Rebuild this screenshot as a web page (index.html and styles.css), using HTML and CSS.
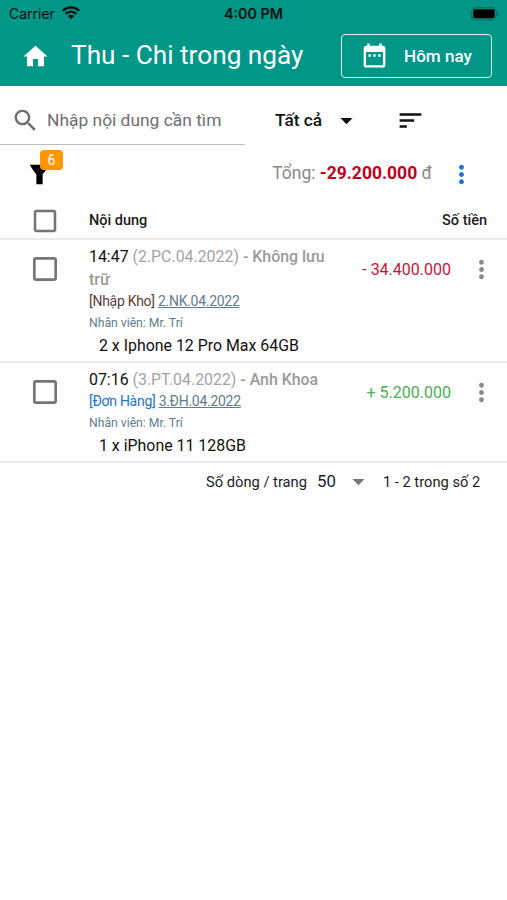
FILE: index.html
```html
<!DOCTYPE html>
<html lang="vi">
<head>
<meta charset="utf-8">
<title>Thu - Chi trong ngày</title>
<link rel="stylesheet" href="styles.css">
</head>
<body>
<svg class="defs" width="0" height="0">
  <symbol id="more" viewBox="0 0 24 24"><path d="M12 8c1.100 0 2-.9 2-2s-.9-2-2-2-2 .9-2 2 .9 2 2 2zm0 2c-1.100 0-2 .9-2 2s.9 2 2 2 2-.9 2-2-.9-2-2-2zm0 6c-1.100 0-2 .9-2 2s.9 2 2 2 2-.9 2-2-.9-2-2-2z"/></symbol>
  <symbol id="box" viewBox="0 0 24 24"><path d="M19 5v14H5V5h14m0-2H5c-1.100 0-2 .9-2 2v14c0 1.100.9 2 2 2h14c1.100 0 2-.9 2-2V5c0-1.100-.9-2-2-2z"/></symbol>
  <symbol id="down" viewBox="0 0 24 24"><path d="M7 10l5 5 5-5z"/></symbol>
</svg>
<header class="appbar">
  <div class="status">
    <span class="carrier">Carrier</span>
    <svg class="wifi" viewBox="0 0 18 13"><g fill="none" stroke="#06110f" stroke-width="2.300"><path d="M.8 4.800a11.600 11.600 0 0 1 16.400 0"/><path d="M3.700 7.900a7.500 7.500 0 0 1 10.600 0"/></g><path fill="#06110f" d="M5.800 10a4.500 4.500 0 0 1 6.400 0L9 13z"/></svg>
    <span class="clock">4:00 PM</span>
    <svg class="battery" viewBox="0 0 30 14"><rect x=".7" y=".7" width="24.600" height="12.200" rx="3.500" fill="none" stroke="#04665b"/><rect x="2.300" y="2.300" width="21.400" height="9" rx="2" fill="#000"/><path d="M26.800 4.500q2.500 2.300 0 4.600z" fill="#04665b"/></svg>
  </div>
  <div class="toolbar">
    <svg class="icon home" viewBox="0 0 24 24"><path d="M10 20v-6h4v6h5v-8h3L12 3 2 12h3v8z"/></svg>
    <h1 class="title">Thu - Chi trong ngày</h1>
    <button class="today">
      <svg class="icon" viewBox="0 0 24 24"><path d="M9 11H7v2h2v-2zm4 0h-2v2h2v-2zm4 0h-2v2h2v-2zm2-7h-1V2h-2v2H8V2H6v2H5c-1.110 0-1.990.9-1.990 2L3 20c0 1.100.89 2 2 2h14c1.100 0 2-.9 2-2V6c0-1.100-.9-2-2-2zm0 16H5V9h14v11z"/></svg>
      <span>Hôm nay</span>
    </button>
  </div>
</header>
<main>
  <div class="filters">
    <label class="search">
      <svg class="icon" viewBox="0 0 24 24"><path d="M15.500 14h-.79l-.28-.27C15.410 12.590 16 11.110 16 9.500 16 5.910 13.090 3 9.500 3S3 5.910 3 9.500 5.910 16 9.500 16c1.610 0 3.090-.59 4.230-1.570l.27.28v.79l5 4.990L20.490 19l-4.990-5zm-6 0C7.010 14 5 11.990 5 9.500S7.010 5 9.500 5 14 7.010 14 9.500 11.990 14 9.500 14z"/></svg>
      <span class="placeholder">Nhập nội dung cần tìm</span>
    </label>
    <div class="select"><span class="all">Tất cả</span><svg class="icon"><use href="#down"/></svg></div>
    <svg class="icon sort" viewBox="0 0 24 24"><path d="M3 18h6v-2H3v2zM3 6v2h18V6H3zm0 7h12v-2H3v2z"/></svg>
  </div>
  <div class="summary">
    <div class="funnel">
      <svg class="icon" viewBox="0 0 24 24"><path d="M4 4C6.270 8.200 9.400 12 9.400 12V20h5.200v-8s3.130-3.800 5.400-8z"/></svg>
      <span class="badge">6</span>
    </div>
    <div class="total"><span class="total-label">Tổng: </span><b>-29.200.000</b><span class="total-label"> đ</span></div>
    <svg class="icon blue"><use href="#more"/></svg>
  </div>
  <div class="thead">
    <svg class="check"><use href="#box"/></svg>
    <span class="th-name">Nội dung</span>
    <span class="th-money">Số tiền</span>
  </div>
  <div class="row">
    <svg class="check"><use href="#box"/></svg>
    <div class="content">
      <div class="head">14:47 <span class="code">(2.PC.04.2022)</span> <span class="who">- Không lưu<br>trữ</span></div>
      <div class="ref"><span class="stock">[Nhập Kho]</span> <a>2.NK.04.2022</a></div>
      <div class="staff">Nhân viên: Mr. Trí</div>
      <div class="item">2 x Iphone 12 Pro Max 64GB</div>
    </div>
    <span class="amount out">- 34.400.000</span>
    <svg class="icon gray"><use href="#more"/></svg>
  </div>
  <div class="row second">
    <svg class="check"><use href="#box"/></svg>
    <div class="content">
      <div class="head">07:16 <span class="code">(3.PT.04.2022)</span> <span class="who">- Anh Khoa</span></div>
      <div class="ref"><span class="order">[Đơn Hàng]</span> <a>3.ĐH.04.2022</a></div>
      <div class="staff">Nhân viên: Mr. Trí</div>
      <div class="item">1 x iPhone 11 128GB</div>
    </div>
    <span class="amount in">+ 5.200.000</span>
    <svg class="icon gray"><use href="#more"/></svg>
  </div>
  <footer class="pager">
    <span class="per-page">Số dòng / trang</span>
    <span class="size">50</span>
    <svg class="icon"><use href="#down"/></svg>
    <span class="range">1 - 2 trong số 2</span>
  </footer>
</main>
</body>
</html>
```

FILE: styles.css
```css
* { box-sizing: border-box; }
body {
  margin: 0;
  background: #fefefe;
  color: #1c1c1c;
  font-family: Roboto, "Liberation Sans", sans-serif;
  white-space: nowrap;
}
.defs { display: block; }
svg { flex: none; fill: currentColor; }
.icon { width: 29px; height: 29px; }
.appbar { height: 86px; background: #009688; color: #fff; }
.status {
  height: 28px;
  display: flex;
  align-items: center;
  padding: 0 6px 2px 9px;
  color: #06110f;
  font-family: Inter, sans-serif;
}
.carrier { font-size: 14px; width: 47px; }
.wifi { width: 18px; height: 13px; margin-left: 6px; margin-top: -1px; }
.clock { font-size: 14.300px; font-weight: 600; margin-left: 144px; }
.battery { width: 30px; height: 14px; margin: 1px 0 0 auto; }
.toolbar { height: 56px; display: flex; align-items: center; padding: 0 15px 0 21px; }
.title { margin: -2px 0 0 21px; font-size: 26.200px; font-weight: 400; line-height: 30px; }
.today {
  margin-left: auto;
  width: 151px;
  height: 44px;
  display: flex;
  align-items: center;
  gap: 15px;
  padding: 0 0 1px 18px;
  border: 1px solid #d8f4f0;
  border-radius: 4px;
  background: none;
  color: #fff;
  font: 500 17.100px Roboto, sans-serif;
}
.filters { height: 60px; display: flex; align-items: flex-start; }
.search {
  width: 245px;
  height: 59px;
  padding: 10px 0 0 11px;
  display: flex;
  align-items: center;
  gap: 7px;
  color: #6f6f6f;
  border-bottom: 1px solid #bdbdbd;
}
.placeholder { font-size: 17.400px; }
.select { display: flex; align-items: center; margin: 20px 0 0 30px; color: #111; }
.all { width: 57px; margin-top: -2px; font-size: 17.300px; font-weight: 500; }
.sort { margin: 20px 0 0 35px; color: #111; }
.summary { height: 56px; display: flex; align-items: center; padding: 0 31px 0 25px; }
.funnel { position: relative; height: 29px; color: #000; }
.badge {
  position: absolute;
  left: 15px;
  top: -10px;
  width: 23px;
  height: 20px;
  border-radius: 4px;
  background: #ff9800;
  color: #fff;
  font-size: 14px;
  line-height: 20px;
  text-align: center;
}
.total { margin: -2px 15px 0 auto; font-size: 17.500px; white-space: pre; }
.total-label { color: #8a8a8a; }
.total b { color: #c2001c; font-weight: 700; }
.blue { color: #1976d2; }
.gray { color: #8a8a8a; }
.thead {
  height: 38px;
  display: flex;
  align-items: center;
  padding: 0 20px 0 30px;
  border-bottom: 2px solid #ebebeb;
  font-size: 14.500px;
  font-weight: 500;
}
.thead .check { width: 30px; height: 30px; margin-top: 1px; color: #757575; }
.th-name { margin: 1px 0 0 29px; }
.th-money { margin: 1px 0 0 auto; }
.row {
  height: 123px;
  display: flex;
  align-items: flex-start;
  padding: 5px 11px 0 29px;
  border-bottom: 2px solid #ebebeb;
}
.row.second { height: 100px; }
.row .check { width: 32px; height: 32px; margin-top: 8px; color: #757575; }
.content { width: 255px; margin-left: 28px; }
.head { font-size: 15.900px; line-height: 23px; color: #111; }
.code { color: #a3a3a3; }
.who { color: #9a9a9a; font-weight: 500; }
.ref { font-size: 14px; letter-spacing: -.28px; line-height: 20px; margin-bottom: 1px; }
.stock { color: #5d4037; }
.order { color: #1976d2; }
.ref a { color: #607d8b; text-decoration: underline; }
.staff { font-size: 12.200px; line-height: 23px; color: #607d8b; }
.item { font-size: 15.900px; line-height: 22px; padding-left: 10px; color: #111; }
.amount { width: 107px; margin-top: 15px; text-align: right; font-size: 16px; line-height: 20px; }
.out { color: #c2183a; }
.in { color: #4caf50; }
.row .icon { margin: 10px 0 0 auto; }
.pager {
  height: 37px;
  display: flex;
  align-items: center;
  padding-left: 206px;
  font-size: 14.700px;
}
.per-page { width: 101px; }
.size { margin: -1px 0 0 10px; font-size: 16.800px; }
.pager .icon { margin-left: 8px; color: #777; }
.range { margin-left: 10px; }
```
